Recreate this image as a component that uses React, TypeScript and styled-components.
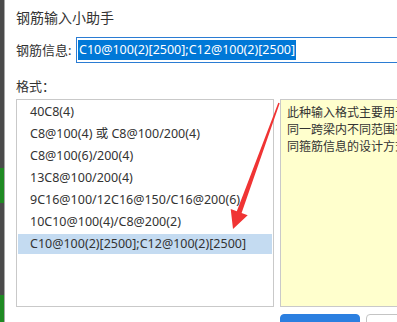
import React from 'react'
import styled, { createGlobalStyle } from 'styled-components'

const GlobalStyle = createGlobalStyle`
  html, body {
    margin: 0;
    padding: 0;
    background: #fff;
    overflow: hidden;
  }
  body {
    font-family: "Noto Sans", "Noto Sans CJK SC", sans-serif;
    color: #333;
  }
`

const Screen = styled.div`
  display: flex;
  align-items: flex-start;
  width: 397px;
  height: 322px;
  overflow: hidden;
`

// the app window behind the dialog, just its edge shows
const BackEdge = styled.div`
  flex: 0 0 4px;
  align-self: stretch;
  border-right: 1px solid #a8a8a8;
  background: linear-gradient(
    to bottom,
    #4a4a4a 0,
    #4a4a4a 168px,
    #1f8a23 168px,
    #1f8a23 203px,
    #4a4a4a 203px,
    #4a4a4a 295px,
    #1f8a23 295px
  );
`

const Dialog = styled.div`
  flex: 0 0 540px;
  display: flex;
  flex-direction: column;
  padding: 8px 0 0 11px;
  background: #fff;
`

const Title = styled.div`
  font-size: 14px;
  line-height: 19px;
  color: #333;
`

const FieldRow = styled.div`
  display: flex;
  align-items: center;
  margin-top: 10px;
`

const Label = styled.div`
  width: 60px;
  font-size: 13px;
  line-height: 18px;
  color: #333;
`

const InputBox = styled.div`
  flex: 1;
  height: 24px;
  border: 1px solid #2b7cd3;
  display: flex;
  align-items: center;
  padding-left: 1px;
  font-size: 12.5px;
`

const Selected = styled.span`
  background: #0078d7;
  color: #fff;
  line-height: 20px;
  padding: 0 1px;
`

const SectionLabel = styled(Label)`
  margin-top: 14px;
`

const Panels = styled.div`
  position: relative;
  flex: 0 0 208px;
  display: flex;
  gap: 6px;
  margin-top: 4px;
`

const List = styled.ul`
  list-style: none;
  margin: 0;
  flex: 0 0 254px;
  border: 1px solid #c9c9c9;
  padding: 2px 1px;
`

const Item = styled.li<{ $active?: boolean }>`
  height: 20px;
  line-height: 20px;
  margin-bottom: 2px;
  padding-left: 12px;
  font-size: 12.5px;
  white-space: nowrap;
  overflow: hidden;
  color: #333;
  background: ${({ $active }) => ($active ? '#c4dbf1' : 'transparent')};
`

const Note = styled.div`
  flex: 1;
  border: 1px solid #c9c9c9;
  background: #ffffcd;
  padding: 4px 6px;
  font-size: 12px;
  line-height: 17px;
  color: #333;
  white-space: nowrap;
`

const Arrow = styled.svg`
  position: absolute;
  left: 0;
  top: 0;
  width: 300px;
  height: 140px;
  overflow: visible;
  pointer-events: none;
`

const Buttons = styled.div`
  display: flex;
  gap: 6px;
  margin-top: 7px;
  padding-left: 264px;
`

const Button = styled.div<{ $primary?: boolean }>`
  flex: 0 0 ${({ $primary }) => ($primary ? '80px' : '76px')};
  height: 24px;
  border-radius: 4px;
  background: ${({ $primary }) => ($primary ? '#2b7fe0' : '#fff')};
  border: 1px solid ${({ $primary }) => ($primary ? '#2b7fe0' : '#c4c4c4')};
  box-sizing: border-box;
`

const formats = [
  '40C8(4)',
  'C8@100(4) 或 C8@100/200(4)',
  'C8@100(6)/200(4)',
  '13C8@100/200(4)',
  '9C16@100/12C16@150/C16@200(6)',
  '10C10@100(4)/C8@200(2)',
  'C10@100(2)[2500];C12@100(2)[2500]',
]

export default function App() {
  const current = formats[formats.length - 1]
  return (
    <Screen>
      <GlobalStyle />
      <BackEdge />
      <Dialog>
        <Title>钢筋输入小助手</Title>
        <FieldRow>
          <Label>钢筋信息:</Label>
          <InputBox>
            <Selected>{current}</Selected>
          </InputBox>
        </FieldRow>
        <SectionLabel>格式：</SectionLabel>
        <Panels>
          <List>
            {formats.map((f) => (
              <Item key={f} $active={f === current}>
                {f}
              </Item>
            ))}
          </List>
          <Note>
            此种输入格式主要用于梁箍筋，表示在
            <br />
            同一跨梁内不同范围存在不
            <br />
            同箍筋信息的设计方式。
          </Note>
          <Arrow viewBox="0 0 300 140">
            <polygon
              points="262.3,3.8 263.7,4.2 225.6,114 231.7,116.2 217,130 214.7,110 220.8,112.2"
              fill="#f03434"
            />
          </Arrow>
        </Panels>
        <Buttons>
          <Button $primary />
          <Button />
        </Buttons>
      </Dialog>
    </Screen>
  )
}
